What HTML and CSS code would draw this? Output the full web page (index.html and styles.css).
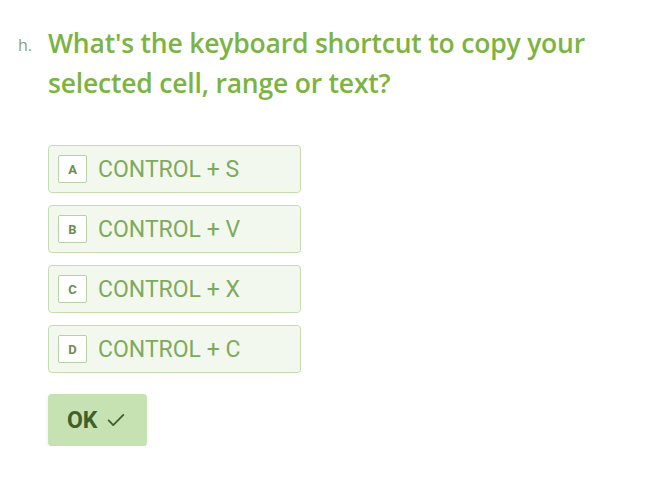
FILE: index.html
```html
<!DOCTYPE html>
<html>
<head>
<meta charset="utf-8">
<link rel="stylesheet" href="styles.css">
</head>
<body>
<div class="page">
  <div class="question">
    <span class="num">h.</span>
    <h1 class="title">What's the keyboard shortcut to copy your selected cell, range or text?</h1>
  </div>
  <div class="options">
    <div class="option"><span class="key">A</span><span class="label">CONTROL + S</span></div>
    <div class="option"><span class="key">B</span><span class="label">CONTROL + V</span></div>
    <div class="option"><span class="key">C</span><span class="label">CONTROL + X</span></div>
    <div class="option"><span class="key">D</span><span class="label">CONTROL + C</span></div>
  </div>
  <button class="ok">OK <svg width="22" height="22" viewBox="0 0 24 24"><path d="M4 12.5l5 5L20 6.5" fill="none" stroke="#3f5f2c" stroke-width="2" stroke-linecap="round" stroke-linejoin="round"/></svg></button>
</div>
</body>
</html>
```
FILE: styles.css
```css
html, body { margin: 0; padding: 0; background: #fff; }
.page { padding: 23px 0 0 18px; }
.question { display: flex; align-items: flex-start; }
.num {
  font-family: "Open Sans", sans-serif;
  font-size: 16px;
  color: #8aa07a;
  width: 30px;
  line-height: 40px;
  margin-top: 2px;
}
.title {
  margin: 0;
  font-family: "Open Sans", sans-serif;
  font-weight: 600;
  font-size: 26.5px;
  line-height: 40px;
  color: #7cb342;
  width: 600px;
  letter-spacing: -0.2px;
}
.options {
  display: flex;
  flex-direction: column;
  gap: 12px;
  margin: 42px 0 0 30px;
}
.option {
  display: flex;
  align-items: center;
  width: 251px;
  height: 46px;
  border: 1px solid #c5dcb0;
  border-radius: 4px;
  background: #f3f8ef;
}
.key {
  display: flex;
  align-items: center;
  justify-content: center;
  box-sizing: border-box;
  width: 29px;
  height: 28px;
  margin-left: 9px;
  border: 1px solid #b9d0a6;
  background: #fff;
  border-radius: 2px;
  font-family: "Roboto", sans-serif;
  font-weight: 700;
  font-size: 13px;
  color: #6c8c56;
}
.label {
  margin-left: 11px;
  font-family: "Roboto", sans-serif;
  font-size: 23px;
  color: #7daa5c;
}
.ok {
  display: flex;
  align-items: center;
  gap: 8px;
  margin: 21px 0 0 30px;
  width: 99px;
  height: 52px;
  padding: 0 0 0 19px;
  border: none;
  border-radius: 4px;
  background: #c6e1b2;
  box-shadow: 0 2px 4px rgba(0,0,0,0.08);
  font-family: "Roboto", sans-serif;
  font-weight: 700;
  font-size: 23px;
  color: #3f5f2c;
}
```
